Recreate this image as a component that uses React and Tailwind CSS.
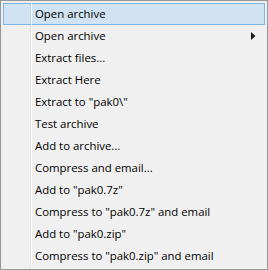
const items = [
  { label: "Open archive", active: true },
  { label: "Open archive", submenu: true },
  { label: "Extract files..." },
  { label: "Extract Here" },
  { label: 'Extract to "pak0\\"' },
  { label: "Test archive" },
  { label: "Add to archive..." },
  { label: "Compress and email..." },
  { label: 'Add to "pak0.7z"' },
  { label: 'Compress to "pak0.7z" and email' },
  { label: 'Add to "pak0.zip"' },
  { label: 'Compress to "pak0.zip" and email' },
];

export default function App() {
  return (
    <div
      className="relative w-[268px] h-[270px] border border-[#979797] bg-[#f0f0f0] p-[2px] text-[11.4px] text-black"
      style={{ fontFamily: '"Open Sans", "Noto Sans", sans-serif' }}
    >
      {/* gutter */}
      <div className="absolute top-[2px] bottom-[2px] left-[29px] w-px bg-black/[0.06] z-10" />
      <div className="absolute top-[2px] bottom-[2px] left-[30px] w-px bg-white/70 z-10" />

      {items.map((item, i) => (
        <div
          key={i}
          className={
            "relative h-[22px] flex items-center pl-[31px] pr-[8px] " +
            (item.active ? "border border-[#7eb4ea] bg-[#d1e2f2]" : "border border-transparent")
          }
        >
          <span className="flex-1 leading-none">{item.label}</span>
          {item.submenu && (
            <svg width="5" height="8" viewBox="0 0 5 8">
              <path d="M0 0 L4.5 4 L0 8 Z" fill="#1a1a1a" />
            </svg>
          )}
        </div>
      ))}
    </div>
  );
}
